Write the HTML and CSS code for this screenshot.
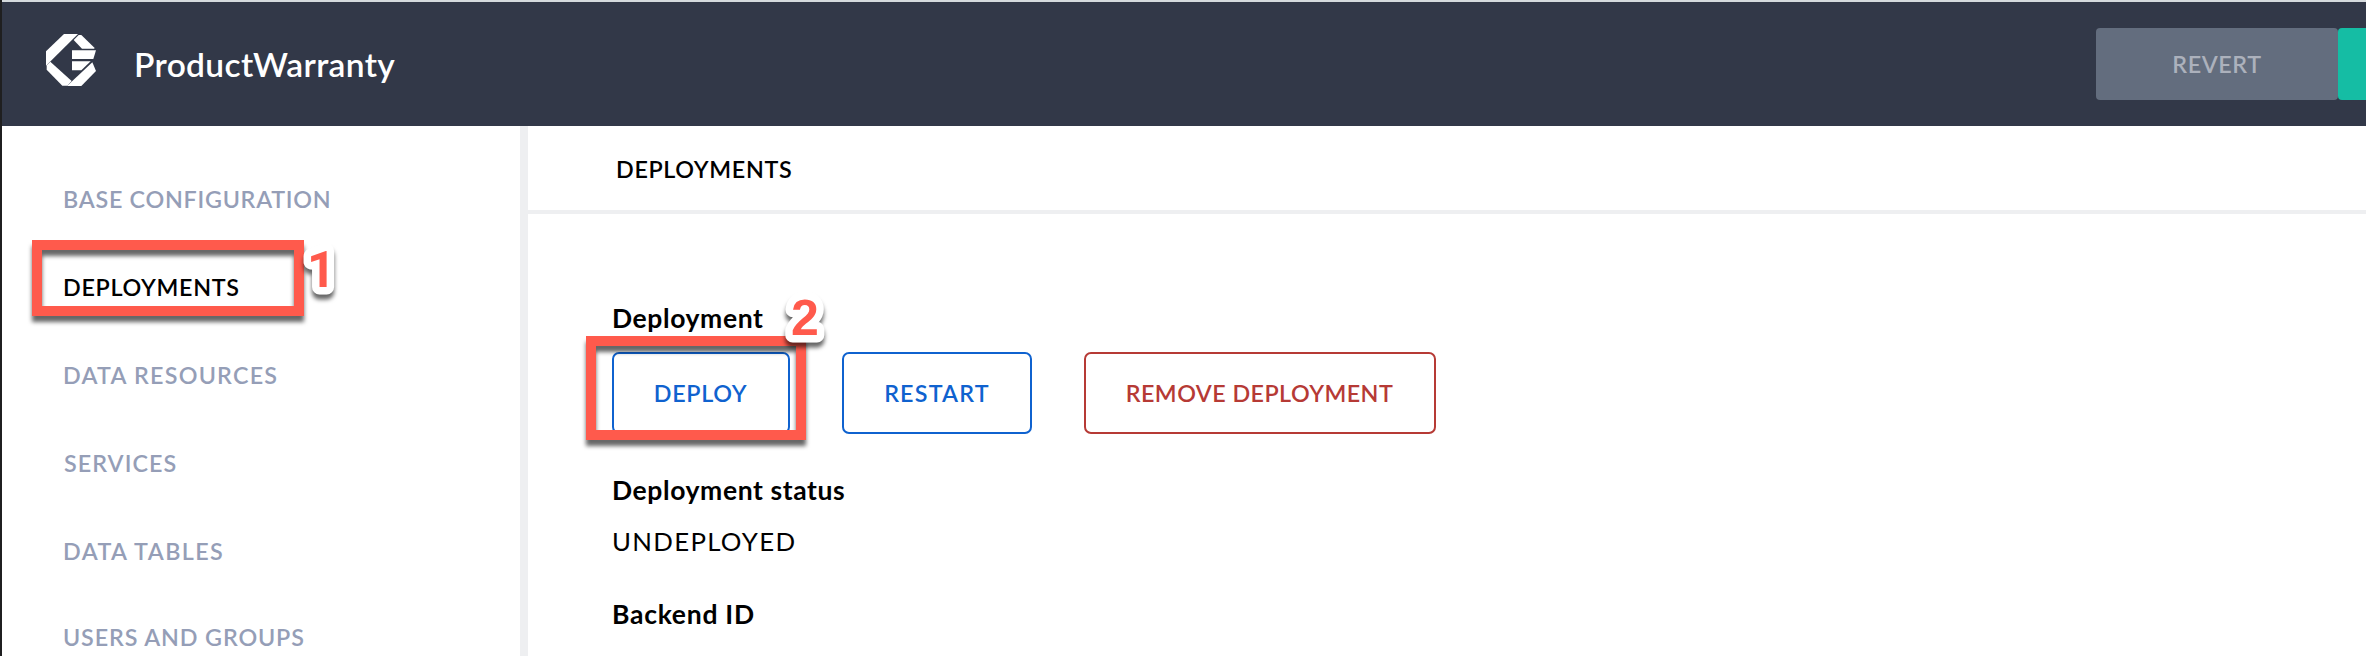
FILE: index.html
```
<!DOCTYPE html>
<html lang="en">
<head>
<meta charset="utf-8">
<title>ProductWarranty</title>
<link rel="stylesheet" href="styles.css">
</head>
<body>
<div class="app">
  <header class="topbar">
    <svg class="logo" viewBox="48 42 150 156" aria-hidden="true">
      <path d="M102 42H144L48 137V94Z"/>
      <path d="M146 45L154 45L194 84L192 86H156L131 60Z"/>
      <path d="M126 91H198L190 117H126Z"/>
      <path d="M126 124H182L154 151H126Z"/>
      <path d="M187 127L198 153L154 198H111Z"/>
      <path d="M61 125L125 183L112 197H97L50 149V136Z"/>
    </svg>
    <h1 class="title">ProductWarranty</h1>
    <div class="actions">
      <button class="action action-revert">REVERT</button>
      <button class="action action-save" aria-label="Save"></button>
    </div>
  </header>
  <div class="body">
    <nav class="sidebar">
      <a class="nav-item base">BASE CONFIGURATION</a>
      <a class="nav-item active">DEPLOYMENTS</a>
      <a class="nav-item resources">DATA RESOURCES</a>
      <a class="nav-item services">SERVICES</a>
      <a class="nav-item tables">DATA TABLES</a>
      <a class="nav-item users">USERS AND GROUPS</a>
    </nav>
    <main class="main">
      <div class="crumb">DEPLOYMENTS</div>
      <section class="content">
        <h2 class="label">Deployment</h2>
        <div class="buttons">
          <button class="btn deploy">DEPLOY</button>
          <button class="btn restart">RESTART</button>
          <button class="btn remove">REMOVE DEPLOYMENT</button>
        </div>
        <h2 class="label">Deployment status</h2>
        <p class="value">UNDEPLOYED</p>
        <h2 class="label backend">Backend ID</h2>
      </section>
    </main>
  </div>
  <div class="callout callout-nav"></div>
  <div class="callout callout-deploy"></div>
  <svg class="marks" viewBox="0 0 2366 656">
    <text class="mark mark-one" x="307" y="287">1</text>
    <text class="mark" x="791" y="335">2</text>
  </svg>
</div>
</body>
</html>
```

FILE: styles.css
```
* { box-sizing: border-box; }

body {
  margin: 0;
  font-family: Lato, "Liberation Sans", sans-serif;
  font-size: 23.3px;
  font-weight: 600;
  color: #000;
  background: #fff;
}

.app {
  position: relative;
  display: flex;
  flex-direction: column;
  height: 656px;
  overflow: hidden;
  border-left: 2px solid #1f1f20;
}

.topbar {
  display: flex;
  align-items: center;
  flex: none;
  height: 126px;
  padding-left: 44px;
  border-top: 2px solid #d5dadd;
  background: #323848;
}

.logo {
  width: 50px;
  height: 52px;
  margin-bottom: 8px;
  fill: #fff;
}

.title {
  margin: 0 0 1px 38px;
  font-size: 33.5px;
  font-weight: 600;
  line-height: 40px;
  letter-spacing: 0.35px;
  color: #fff;
}

.actions {
  display: flex;
  margin-left: auto;
}

.action {
  height: 72px;
  padding: 0 0 1px;
  border: 0;
  border-radius: 4px;
  font: inherit;
}

.action-revert {
  width: 242px;
  letter-spacing: 0.62px;
  color: #acb1bc;
  background: #636d7e;
}

.action-save {
  width: 28px;
  border-radius: 4px 0 0 4px;
  background: #15bda4;
}

.body {
  display: flex;
  flex: 1;
  min-height: 0;
}

.sidebar {
  display: flex;
  flex-direction: column;
  flex: none;
  width: 526px;
  padding: 29px 0 0 61px;
  border-right: 8px solid #eeeff1;
}

.nav-item {
  flex: none;
  line-height: 88px;
  white-space: nowrap;
  color: #959eb7;
}

.nav-item.base { letter-spacing: 0.74px; }
.nav-item.active { letter-spacing: 0.7px; color: #000; }
.nav-item.resources { letter-spacing: 1.24px; }
.nav-item.services { padding-left: 1px; letter-spacing: 1.05px; }
.nav-item.tables { letter-spacing: 1.4px; }
.nav-item.users { line-height: 84px; letter-spacing: 0.88px; }

.main { flex: 1; }

.crumb {
  height: 88px;
  padding-left: 88px;
  border-bottom: 4px solid #eeeff1;
  line-height: 87px;
  letter-spacing: 0.66px;
}

.content { padding: 88px 0 0 84px; }

.label,
.value {
  margin: 0;
  font-size: 26.5px;
  font-weight: 700;
  line-height: 32px;
  letter-spacing: 0.6px;
}

.value {
  margin-top: 19px;
  font-size: 25.8px;
  font-weight: 400;
  letter-spacing: 1.3px;
}

.backend { margin-top: 41px; letter-spacing: 0.73px; }

.buttons {
  display: flex;
  gap: 52px;
  margin: 18px 0 40px;
}

.btn {
  height: 82px;
  padding: 0;
  border: 2px solid #0f62cf;
  border-radius: 7px;
  background: #fff;
  font: inherit;
  color: #0f62cf;
}

.deploy { width: 178px; padding-right: 1px; letter-spacing: 0.7px; }
.restart { width: 190px; letter-spacing: 1.2px; }
.remove {
  width: 352px;
  padding-right: 1px;
  letter-spacing: 0.45px;
  border-color: #b63a35;
  color: #b63a35;
}

/* Highlight frames lying over the page */
.callout {
  position: absolute;
  border: 10px solid #ff5a4c;
  filter: drop-shadow(0 6px 2px rgba(0, 0, 0, 0.6));
}

.callout-nav { left: 30px; top: 240px; width: 272px; height: 76px; }
.callout-deploy { left: 584px; top: 336px; width: 220px; height: 104px; }

.marks {
  position: absolute;
  left: -2px;
  top: 0;
  width: 2366px;
  height: 656px;
  pointer-events: none;
}

.mark {
  font: bold 50px "Liberation Sans", sans-serif;
  fill: #ff5a4c;
  stroke: #fff;
  stroke-width: 15px;
  stroke-linejoin: round;
  paint-order: stroke;
  filter: drop-shadow(0 5px 2px rgba(0, 0, 0, 0.6));
}

.mark-one { font-family: Roboto, sans-serif; }
```
